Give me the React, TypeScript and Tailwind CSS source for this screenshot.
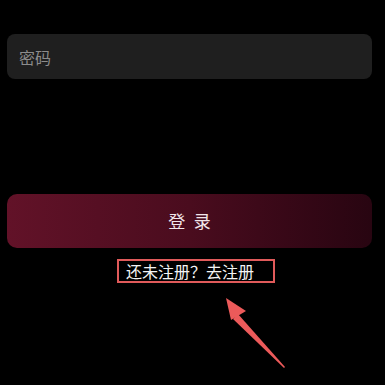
import React from "react";

const font = { fontFamily: '"Noto Sans CJK SC", "Noto Sans", sans-serif' };

export default function App() {
  return (
    <div className="relative h-[385px] w-[385px] overflow-hidden bg-black" style={font}>
      <div className="pl-[7px] pr-[13px] pt-[34px]">
        {/* password input */}
        <div className="flex h-[45px] items-center rounded-[8px] bg-[#1f1f1f] px-[12px]">
          <span className="text-[16px] text-[#8c8c8c]">密码</span>
        </div>

        {/* login button */}
        <button className="mt-[115px] flex h-[54px] w-full items-center justify-center rounded-[10px] bg-gradient-to-r from-[#621228] via-[#4a0c1e] to-[#280511] pl-[0.5em] text-[17px] tracking-[0.5em] text-[#f2e6ea]">
          登录
        </button>

        {/* register link */}
        <div className="mt-[11px] flex justify-center pl-[13px]">
          <div className="flex h-[24px] w-[158px] items-center border-2 border-[#e05a5a] pl-[7px] text-[16px] leading-none text-[#f4f4f4]">
            还未注册？去注册
          </div>
        </div>
      </div>

      {/* annotation arrow */}
      <svg className="absolute left-0 top-0" width="385" height="385" viewBox="0 0 385 385">
        <polygon points="285,367 238,314 233,319 284,368" fill="#ec5a5a" />
        <polygon points="226,298 246,311 231,320" fill="#ec5a5a" />
      </svg>
    </div>
  );
}
